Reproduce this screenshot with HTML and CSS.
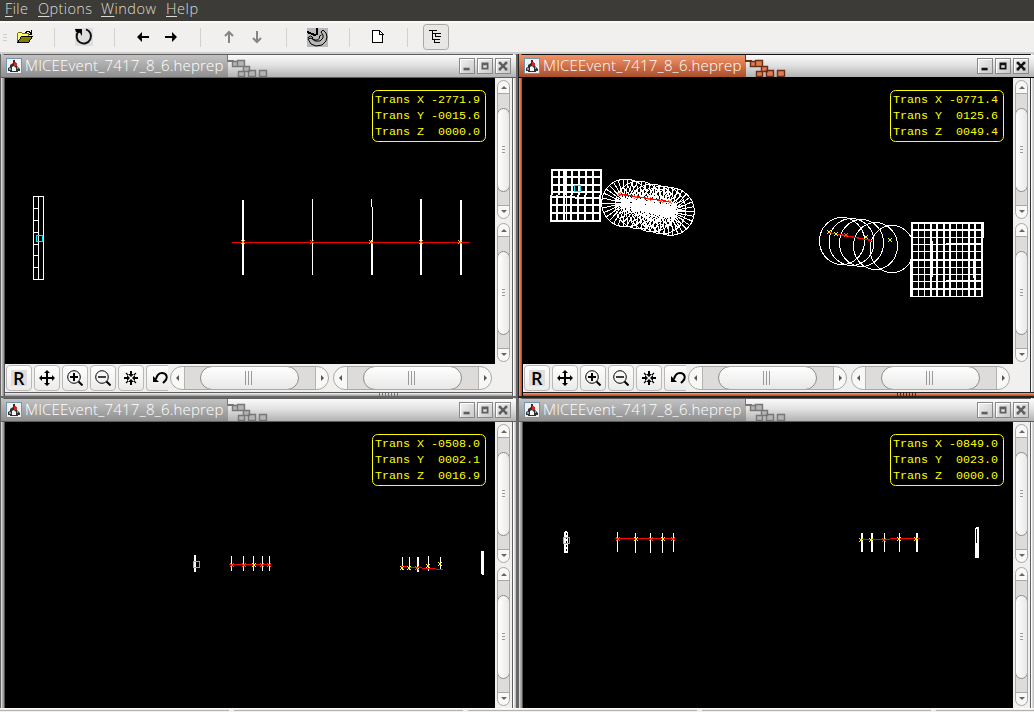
FILE: index.html
```
<!DOCTYPE html>
<html lang="en">
<head>
<meta charset="utf-8">
<title>HepRep event display</title>
<link rel="stylesheet" href="styles.css">
</head>
<body>
<svg class="defs" width="0" height="0" aria-hidden="true">
  <defs>
    <symbol id="java" viewBox="0 0 16 16"><rect x=".5" y=".5" width="15" height="15" fill="#f1f1f1" stroke="#7595ae"/><path d="M7 2h2v3l2 1v2l3 3v2h-2v1H4v-1H2v-3l2-1V7l3-2z" fill="#303030"/><path d="M6 9l2-1 2 2v3H6z" fill="#f8f8f8"/><path d="M3 10h2v2H3zM11 9h1v2h-1z" fill="#999"/><path d="M8 4h2v1h1v3H8z" fill="#e02020"/></symbol>
    <symbol id="steps" viewBox="0 0 42 22"><path d="M0 0v6h6v5h5" fill="none" stroke="var(--edge)" stroke-width="2"/><g fill="var(--sq)" stroke="var(--edge)" stroke-width="1.400"><path d="M5.500 6.500h5v5h-5zM10.500 5.500h7v6h-7zM16.500 11.500h6v5h-6zM11.500 16.500h6v5h-6zM21.500 15.500h7v6h-7zM32.500 15.500h7v6h-7z"/></g></symbol>
    <symbol id="min" viewBox="0 0 16 16"><path d="M4 10h7v3H4z"/></symbol>
    <symbol id="max" viewBox="0 0 16 16"><path fill-rule="evenodd" d="M4 4h8v8H4zM6 7v3h4V7z"/></symbol>
    <symbol id="close" viewBox="0 0 16 16"><path d="M3 3h3v1l2 2 2-2V3h3v3h-1l-2 2 2 2h1v3h-3v-1l-2-2-2 2v1H3v-3h1l2-2-2-2H3z"/></symbol>
    <symbol id="move" viewBox="0 0 16 16"><path d="M8 1v14M1 8h14" stroke="#000" stroke-width="2"/><path d="M8 0l3 3H5zM8 16l3-3H5zM0 8l3-3v6zM16 8l-3-3v6z"/></symbol>
    <symbol id="zin" viewBox="0 0 16 16"><g fill="none" stroke="#000"><circle cx="7" cy="7" r="6.300"/><path d="M7 3v8M3 7h8" stroke-width="2"/><path d="M11.500 11.500l4 4" stroke-width="2"/></g></symbol>
    <symbol id="zout" viewBox="0 0 16 16"><g fill="none" stroke="#000"><circle cx="7" cy="7" r="6.300"/><path d="M3 7h8" stroke-width="1.500"/><path d="M11.500 11.500l4 4" stroke-width="2"/></g></symbol>
    <symbol id="center" viewBox="0 0 16 16"><path d="M8 1v4M8 11v4M1 8h4M11 8h4" stroke="#000" stroke-width="2"/><path d="M3 3l2 2M13 3l-2 2M3 13l2-2M13 13l-2-2" stroke="#000" stroke-width="1.200"/><path d="M8 7L5 4h6zM8 9l-3 3h6zM7 8L4 5v6zM9 8l3-3v6z"/></symbol>
    <symbol id="undo" viewBox="0 0 16 16"><path d="M4 9c1-4 3-6 6-6 5 0 6 5 3 8l-2 2" fill="none" stroke="#000" stroke-width="2"/><path d="M1 6v6h6z"/></symbol>
    <symbol id="mark" viewBox="-3 -3 6 6"><path d="M-2-2L2 2M2-2L-2 2" stroke="currentColor" stroke-width="1.300"/></symbol>
    <g id="wheel" fill="none" stroke="#fff"><circle r="23.800"/><path d="M-24 0H24M-23.500-5L23.500 5M-21.900-9.800L21.900 9.800M-19.400-14.100L19.400 14.100M-16.100-17.800L16.100 17.800M-12-20.800L12 20.800M-7.400-22.800L7.400 22.800M-2.500-23.900L2.500 23.900M2.500-23.900L-2.500 23.900M7.400-22.800L-7.400 22.800M12-20.800L-12 20.800M16.100-17.800L-16.100 17.800M19.400-14.100L-19.400 14.100M21.900-9.800L-21.900 9.800M23.500-5L-23.500 5"/></g>
  </defs>
</svg>

<div class="app">
  <nav class="menubar"><span class="m1"><u>F</u>ile</span><span class="m2"><u>O</u>ptions</span><span class="m3"><u>W</u>indow</span><span class="m4"><u>H</u>elp</span></nav>
  <header class="toolbar">
    <svg class="tools" viewBox="0 21 460 33" width="460" height="33" shape-rendering="crispEdges">
      <path d="M3 34.500h4M3 37.500h4M3 40.500h4" stroke="#d0cecc"/>
      <path d="M54.500 28v19M114.500 28v19M200.500 28v19M286.500 28v19M349.500 28v19M407.500 28v19" stroke="#d3d1cf"/>
      <path d="M17.500 42.500v-9l1-1h3l1 1h6v3" fill="#ffff7a" stroke="#777700"/><path d="M18 33h4v1h6v3h-6l-4 5z" fill="#ffff66"/><path d="M17.500 42.500l4-6h11l-4 6z" fill="#808000" stroke="#000"/><path d="M25 32.500h1l1-1h2l2 2M31.500 30v4h-3" fill="none" stroke="#000"/>
      <rect x="75" y="28" width="18" height="18" fill="#dedede"/>
      <g shape-rendering="auto"><path d="M86 29.400a7.200 7.200 0 1 1-7.500 2" fill="none" stroke="#111" stroke-width="2"/><path d="M75 29h7v7l-2-3-4-1z"/>
      <path d="M138 37h11M165 37h11" stroke="#000" stroke-width="2"/><path d="M137 37l5-5v3.500l-2 1.500 2 1.500V42zM177 37l-5-5v3.500l2 1.500-2 1.500V42z"/>
      <g fill="none" stroke="#858585" stroke-width="2"><path d="M229 43V32M225 36l4-4 4 4M257 31v11M253 38l4 4 4-4"/></g></g>
      <rect x="307" y="28" width="21" height="19" fill="#b9b9b9"/>
      <g fill="none" stroke="#000"><path d="M307 32l8 3 2-1v-6" stroke-width="2"/><path d="M321 32l2-2 3 3 1 4-1 4-4 4-6 1-5-2-3-5 3-1 4 3h5l3-3v-3zM307.500 38l3-2 2 1v2l3 1h2l2-2v-2l2-1" shape-rendering="auto"/></g>
      <path d="M372.500 30.500h7l3 3v9h-10z" fill="#fff" stroke="#000"/><path d="M379.500 30v4h4" fill="none" stroke="#000"/>
      <rect x="423.500" y="24.500" width="25" height="25" rx="3" fill="#e8e7e6" stroke="#aaa8a6" shape-rendering="auto"/>
      <path d="M429 30.500h8M432.500 30v10M433 33.500h8M436 36.500h5M433 39.500h7M435.500 33v4M434 42.500h6M434.500 39v4" fill="none" stroke="#000"/>
    </svg>
  </header>

  <main class="desktop">
    <section class="win">
      <div class="title"><svg class="java"><use href="#java"/></svg><span class="name">MICEEvent_7417_8_6.heprep</span><svg class="steps"><use href="#steps"/></svg><div class="controls"><svg><use href="#min"/></svg><svg><use href="#max"/></svg><svg><use href="#close"/></svg></div></div>
      <div class="body">
        <svg class="view" viewBox="5 78 490 286" shape-rendering="crispEdges">
          <path d="M33.500 196.500h10v83h-10zM38.500 196v83M34 208.500h5M34 220.500h5M34 232.500h5M34 244.500h5M34 255.500h5M34 267.500h5" fill="none" stroke="#fff"/>
          <path d="M243 200v75M421 199v76M461 200v75" stroke="#fff" stroke-width="2"/><path d="M312.500 199v76M371.500 199v8M372.500 207v68M371.500 240v35" stroke="#fff"/>
          <path d="M232 242.500h238" stroke="#f00000"/>
          <g color="#ffb000"><use href="#mark" x="240" y="239" width="6" height="6"/><use href="#mark" x="368" y="239" width="6" height="6"/><use href="#mark" x="418" y="239" width="6" height="6"/><use href="#mark" x="457" y="239" width="6" height="6"/></g><use href="#mark" x="309" y="239" width="6" height="6" color="#f53c05"/>
          <rect x="36.500" y="235.500" width="6" height="6" fill="none" stroke="#00eaf5"/>
          <rect class="trbox" x="372.500" y="90.500" width="113" height="51" rx="5"/><g class="tr"><text x="375" y="103">Trans X -2771.9</text><text x="375" y="119">Trans Y -0015.6</text><text x="375" y="135">Trans Z &#160;0000.0</text></g>
        </svg>
        <div class="vbars"><div class="vs"><i></i></div><div class="vs"><i></i></div></div>
      </div>
      <div class="bottom"><b class="r"><span>R</span></b><b><svg><use href="#move"/></svg></b><b><svg><use href="#zin"/></svg></b><b><svg><use href="#zout"/></svg></b><b><svg><use href="#center"/></svg></b><b class="cut"><svg><use href="#undo"/></svg></b><div class="hs"><i></i></div><div class="hs"><i></i></div></div>
      <div class="grip"></div>
    </section>

    <section class="win active">
      <div class="title"><svg class="java"><use href="#java"/></svg><span class="name">MICEEvent_7417_8_6.heprep</span><svg class="steps"><use href="#steps"/></svg><div class="controls"><svg><use href="#min"/></svg><svg><use href="#max"/></svg><svg><use href="#close"/></svg></div></div>
      <div class="body">
        <svg class="view" viewBox="523 78 490 286" shape-rendering="crispEdges">
          <g fill="none" stroke="#fff">
            <path d="M552 169v26M558.500 169v26M565 169v26M572 169v26M579 169v26M586 169v26M593 169v26M600.500 169v26M551 195v27M557 195v27M563.500 195v27M571 195v27M578 195v27M585 195v27M592.500 195v27M600 195v27" stroke-width="2"/><path d="M566.500 169v53M563.500 169v26"/>
            <path d="M551 170h51M551 177h51M551 184.500h51M551 191.500h51M550 196.500h25M575 198h26M550 205h51M550 213h51M550 221h51" stroke-width="2"/>
            <use href="#wheel" x="625.500" y="203"/><use href="#wheel" x="639" y="205"/><use href="#wheel" x="652" y="208"/><use href="#wheel" x="662" y="210"/><use href="#wheel" x="670.500" y="211.500"/>
            <ellipse cx="842" cy="241" rx="22.500" ry="23.500"/><ellipse cx="851.500" cy="242" rx="22.500" ry="23.500"/><ellipse cx="861.500" cy="243" rx="22" ry="23.500"/><ellipse cx="875.500" cy="246" rx="22" ry="23.500"/><ellipse cx="892" cy="249" rx="22" ry="23.500"/>
          </g>
          <rect x="911" y="222" width="72" height="75"/>
          <g fill="none" stroke="#fff"><path d="M912 222v75M918.500 222v75M924.500 222v75M931 222v75M937 222v75M944 222v75M950 222v75M956.500 222v75M962.500 222v75M969 222v75M975 222v75M982 222v75" stroke-width="1.700"/><path d="M983.500 222v16M932.500 241v36M930.500 275v21M973.500 259v19M910.500 259v38"/><path d="M911 223h73M911 230h72M911 237.500h72M911 244.500h72M911 251.500h72M911 260h72M911 267.500h72M911 274.500h72M911 281.500h72M911 289h72M911 296.500h71" stroke-width="1.500"/><path d="M946 244h36M912 260h36M946 281h36" stroke-width="2"/></g>
          <path d="M619 194l52 8M828 232.500l44 8" stroke="#f00" stroke-width="1.300"/>
          <g color="#ff5a1f"><use href="#mark" x="616" y="191" width="6" height="6"/><use href="#mark" x="633" y="194" width="6" height="6"/><use href="#mark" x="646" y="196" width="6" height="6"/><use href="#mark" x="658" y="198" width="6" height="6"/><use href="#mark" x="667" y="199" width="6" height="6"/><use href="#mark" x="843" y="232" width="6" height="6"/></g>
          <g color="#ff0"><use href="#mark" x="826" y="229" width="6" height="6"/><use href="#mark" x="833" y="231" width="6" height="6"/><use href="#mark" x="863" y="234" width="6" height="6"/><use href="#mark" x="887" y="237" width="6" height="6"/></g>
          <rect x="574.500" y="185.500" width="6" height="6" fill="none" stroke="#00eaf5"/>
          <rect class="trbox" x="890.500" y="90.500" width="113" height="51" rx="5"/><g class="tr"><text x="893" y="103">Trans X -0771.4</text><text x="893" y="119">Trans Y &#160;0125.6</text><text x="893" y="135">Trans Z &#160;0049.4</text></g>
        </svg>
        <div class="vbars"><div class="vs"><i></i></div><div class="vs"><i></i></div></div>
      </div>
      <div class="bottom"><b class="r"><span>R</span></b><b><svg><use href="#move"/></svg></b><b><svg><use href="#zin"/></svg></b><b><svg><use href="#zout"/></svg></b><b><svg><use href="#center"/></svg></b><b class="cut"><svg><use href="#undo"/></svg></b><div class="hs"><i></i></div><div class="hs"><i></i></div></div>
      <div class="grip"></div>
    </section>

    <section class="win">
      <div class="title"><svg class="java"><use href="#java"/></svg><span class="name">MICEEvent_7417_8_6.heprep</span><svg class="steps"><use href="#steps"/></svg><div class="controls"><svg><use href="#min"/></svg><svg><use href="#max"/></svg><svg><use href="#close"/></svg></div></div>
      <div class="body">
        <svg class="view" viewBox="5 422 490 286" shape-rendering="crispEdges">
          <path d="M195 555v17M418 557v15" stroke="#fff" stroke-width="2"/><path d="M231.500 556v15M243.500 556v15M253.500 556v15M262.500 556v15M269.500 556v15M402.500 557v13M409.500 557v13M428.500 556v15M440.500 557v13" stroke="#fff"/><path d="M481 551h3v24h-2v-1h-1z" fill="#fff"/>
          <path d="M229 564.500h42M401 566.500h7M408 567.500h14M422 568.500h14M436 569.500h7" stroke="#f00"/>
          <g color="#ff4a00"><use href="#mark" x="229" y="562" width="6" height="6"/><use href="#mark" x="241" y="562" width="6" height="6"/><use href="#mark" x="259" y="562" width="6" height="6"/><use href="#mark" x="266" y="562" width="6" height="6"/><use href="#mark" x="414" y="565" width="6" height="6"/></g><g color="#ff0"><use href="#mark" x="251" y="562" width="6" height="6"/><use href="#mark" x="399" y="565" width="6" height="6"/><use href="#mark" x="406" y="565" width="6" height="6"/><use href="#mark" x="425" y="563" width="6" height="6"/><use href="#mark" x="437" y="561" width="6" height="6"/></g>
          <rect x="193.500" y="561.500" width="6" height="6" fill="none" stroke="#00eaf5"/>
          <rect class="trbox" x="372.500" y="434.500" width="113" height="51" rx="5"/><g class="tr"><text x="375" y="447">Trans X -0508.0</text><text x="375" y="463">Trans Y &#160;0002.1</text><text x="375" y="479">Trans Z &#160;0016.9</text></g>
        </svg>
        <div class="vbars"><div class="vs"><i></i></div><div class="vs"><i></i></div></div>
      </div>
    </section>

    <section class="win">
      <div class="title"><svg class="java"><use href="#java"/></svg><span class="name">MICEEvent_7417_8_6.heprep</span><svg class="steps"><use href="#steps"/></svg><div class="controls"><svg><use href="#min"/></svg><svg><use href="#max"/></svg><svg><use href="#close"/></svg></div></div>
      <div class="body">
        <svg class="view" viewBox="523 422 490 286" shape-rendering="crispEdges">
          <path d="M564 532h1v-1h2v1h1v21h-4z" fill="#fff"/><path d="M566.500 533v19" stroke="#000" stroke-dasharray="2 2"/>
          <path d="M617.500 532v20M635.500 533v20M650.500 533v20M662.500 533v20M673.500 533v19M884.500 533v19M899.500 533v19" stroke="#fff"/><path d="M862 533v19M872 533v19M917 533v19" stroke="#fff" stroke-width="2"/><path d="M975 528l1-1h3v31h-4z" fill="#fff"/><path d="M976.500 529v14" stroke="#000"/>
          <path d="M615 538.500h60M860 539.500h30M890 538.500h30" stroke="#f00"/>
          <g color="#ff4a00"><use href="#mark" x="615" y="536" width="6" height="6"/><use href="#mark" x="648" y="536" width="6" height="6"/><use href="#mark" x="670" y="536" width="6" height="6"/><use href="#mark" x="881" y="537" width="6" height="6"/></g><g color="#ff0"><use href="#mark" x="633" y="536" width="6" height="6"/><use href="#mark" x="660" y="536" width="6" height="6"/><use href="#mark" x="858" y="537" width="6" height="6"/><use href="#mark" x="868" y="537" width="6" height="6"/><use href="#mark" x="896" y="536" width="6" height="6"/><use href="#mark" x="913" y="536" width="6" height="6"/></g>
          <rect x="563.500" y="537.500" width="6" height="6" fill="none" stroke="#00eaf5"/>
          <rect class="trbox" x="890.500" y="434.500" width="113" height="51" rx="5"/><g class="tr"><text x="893" y="447">Trans X -0849.0</text><text x="893" y="463">Trans Y &#160;0023.0</text><text x="893" y="479">Trans Z &#160;0000.0</text></g>
        </svg>
        <div class="vbars"><div class="vs"><i></i></div><div class="vs"><i></i></div></div>
      </div>
    </section>
  </main>
  <footer class="status"></footer>
</div>
</body>
</html>
```
FILE: styles.css
```
* { box-sizing: border-box; }
body { margin: 0; background: #f1f0ee; font-family: "Open Sans", "Noto Sans", sans-serif; }
.defs { position: absolute; }
.app { width: 1034px; height: 712px; overflow: hidden; display: grid; grid-template-rows: 21px 33px 654px 4px; }
.menubar { background: #3c3b37; color: #dfdbd2; font-size: 14.5px; line-height: 18px; padding-left: 5px; display: grid; grid-template-columns: 33px 63px 65px 60px; font-weight: 300; white-space: nowrap; }
.menubar u { text-underline-offset: 2px; text-decoration-thickness: 1px; }
.m1 { letter-spacing: .4px; }
.m2 { letter-spacing: .4px; }
.m3 { letter-spacing: .5px; }
.m4 { letter-spacing: .6px; }
.toolbar { background: linear-gradient(#fbfaf9 0 2px, #f1f0ee 2px 31px, #d0cecc 31px); }
.tools { display: block; }
.desktop { background: #6b6b6b; display: grid; grid-template-columns: 518px 518px; grid-template-rows: 344px 344px; overflow: hidden; }

.win { --a: #c2c2c2; --b: #8f8f8f; --edge: #777; --sq: #b4b4b4; --ctl: #5e5e5e; --line: #5e5e5e;
  display: grid; grid-template-rows: 23px 286px 28px 6px; padding: 1px 6px 0 5px; height: 344px;
  background:
    linear-gradient(90deg, #666 1px, #d8d8d8 1px 2px, #b0b0b0 2px 3px, #999 3px 4px, #555 4px) 0 0 / 5px 342px no-repeat,
    linear-gradient(90deg, #5e5e5e 1px, #fff 1px 2px, #ddd 2px 3px, #c4c4c4 3px 4px, #666 4px) 512px 0 / 6px 342px no-repeat,
    linear-gradient(#5e5e5e 1px, #e6e6e6 1px 2px, #c8c8c8 2px 3px, #a9a9a9 3px 4px, #666 4px) 0 338px / 518px 6px no-repeat,
    #5e5e5e; }
.win.active { --a: #f49468; --b: #a94e2b; --edge: #6c2e17; --sq: #dd7c53; --ctl: #111; --line: #000;
  background:
    linear-gradient(90deg, #222 1px, #f28c60 1px 2px, #df6f43 2px 3px, #b95430 3px 4px, #000 4px) 0 0 / 5px 342px no-repeat,
    linear-gradient(90deg, #333 1px, #fff 1px 2px, #ddd 2px 3px, #c4c4c4 3px) 512px 0 / 6px 338px no-repeat,
    linear-gradient(#222 1px, #f28c60 1px 2px, #df6f43 2px 3px, #b95430 3px 4px, #222 4px) 0 338px / 518px 6px no-repeat,
    #111; }
.title { margin: 0 -4px; height: 23px; display: flex; align-items: flex-start; padding-left: 5px; border-bottom: 1px solid var(--line);
  background: linear-gradient(var(--a), var(--b)) 0 0 / 227px 22px no-repeat, linear-gradient(#fafafa, #e2e2e2 45%, #b2b2b2); }
.java { width: 16px; height: 16px; margin-top: 3px; flex: none; }
.name { color: #fff; font-size: 15px; font-weight: 300; line-height: 21px; width: 202px; padding-left: 3px; letter-spacing: .18px; white-space: nowrap; }
.steps { width: 42px; height: 22px; margin-left: 3px; flex: none; }
.controls { display: flex; gap: 2px; margin: 3px 0 0 auto; padding-right: 5px; }
.controls svg { width: 16px; height: 16px; fill: var(--ctl); background: linear-gradient(135deg, #f2f2f2, #c9c9c9); border: 1px solid #888; box-shadow: inset 1px 1px #fff; }
.body { display: grid; grid-template-columns: 490px 17px; }
.view { width: 490px; height: 286px; background: #000; display: block; }
.trbox { fill: none; stroke: #ff0; shape-rendering: auto; }
.tr { fill: #ff0; font: 11.67px "Liberation Mono", monospace; }
.vbars { background: #f1f0ee; padding: 2px 2px 0; display: flex; flex-direction: column; gap: 4px; }

.vs, .hs { position: relative; background: #dedcda; border: 1px solid #aaa7a4; border-radius: 12px; overflow: hidden; display: flex; }
.vs { height: 139px; width: 13px; padding-top: 27px; background: linear-gradient(#f8f8f7 12px, #aaa7a4 12px 13px, #dedcda 13px 124px, #aaa7a4 124px 125px, #f8f8f7 125px); }
.vs i { width: 13px; height: 84px; margin: 0 -1px; flex: none; border: 1px solid #8f8c89; border-radius: 7px; background: linear-gradient(#999 1px, transparent 1px 3px, #999 3px 4px, transparent 4px 6px, #999 6px) 4px 37px / 3px 7px no-repeat, linear-gradient(90deg, #fff, #e9e8e7); }
.vs::before, .vs::after, .hs::before, .hs::after { content: ""; position: absolute; border: 3px solid transparent; }
.vs::before { left: 3px; top: 2px; border-bottom-color: #666; }
.vs::after { left: 3px; bottom: 2px; border-top-color: #666; }
.hs { width: 159px; height: 24px; margin: 2px 4px 0 0; flex: none; padding-left: 29px; background: linear-gradient(90deg, #f8f8f7 13px, #b5b2af 13px 14px, #dedcda 14px 144px, #b5b2af 144px 145px, #f8f8f7 145px); }
.hs i { width: 99px; height: 24px; margin-top: -1px; border: 1px solid #8f8c89; border-radius: 12px; background: linear-gradient(90deg, #999 1px, transparent 1px 3px, #999 3px 4px, transparent 4px 6px, #999 6px) 44px 4px / 7px 14px no-repeat, linear-gradient(#fff, #e9e8e7); }
.hs::before { left: 2px; top: 8px; border-right-color: #555; }
.hs::after { right: 1px; top: 8px; border-left-color: #555; }
.bottom { background: #f1f0ee; display: flex; }
.bottom b { width: 26px; height: 26px; margin: 1px 1px 0; flex: none; border: 1px solid #bbb8b5; border-radius: 4px; background: linear-gradient(#fff, #ecebea); display: grid; place-items: center; }
.bottom b svg { width: 16px; height: 16px; }
.bottom .cut { width: 22px; margin-right: 2px; border-right: 0; border-radius: 4px 0 0 4px; justify-items: end; }
.bottom .r span { font: 600 18px/16px "Open Sans", sans-serif; background: linear-gradient(#dedede, #dedede) 0 0 / 16px 16px no-repeat; width: 16px; padding-left: 2px; }
.grip { width: 19px; height: 3px; margin: 1px 0 0 374px; background: repeating-linear-gradient(90deg, #777 0 1px, transparent 1px 3px); }
.active .grip { background: repeating-linear-gradient(90deg, #5a2410 0 1px, transparent 1px 3px); }
.status { background: linear-gradient(#fff 1px, #f1f0ee 1px 2px, transparent 2px 3px, #f1f0ee 3px), repeating-linear-gradient(90deg, #b5b3b0 0 229px, #f1f0ee 229px 234px); }
```
